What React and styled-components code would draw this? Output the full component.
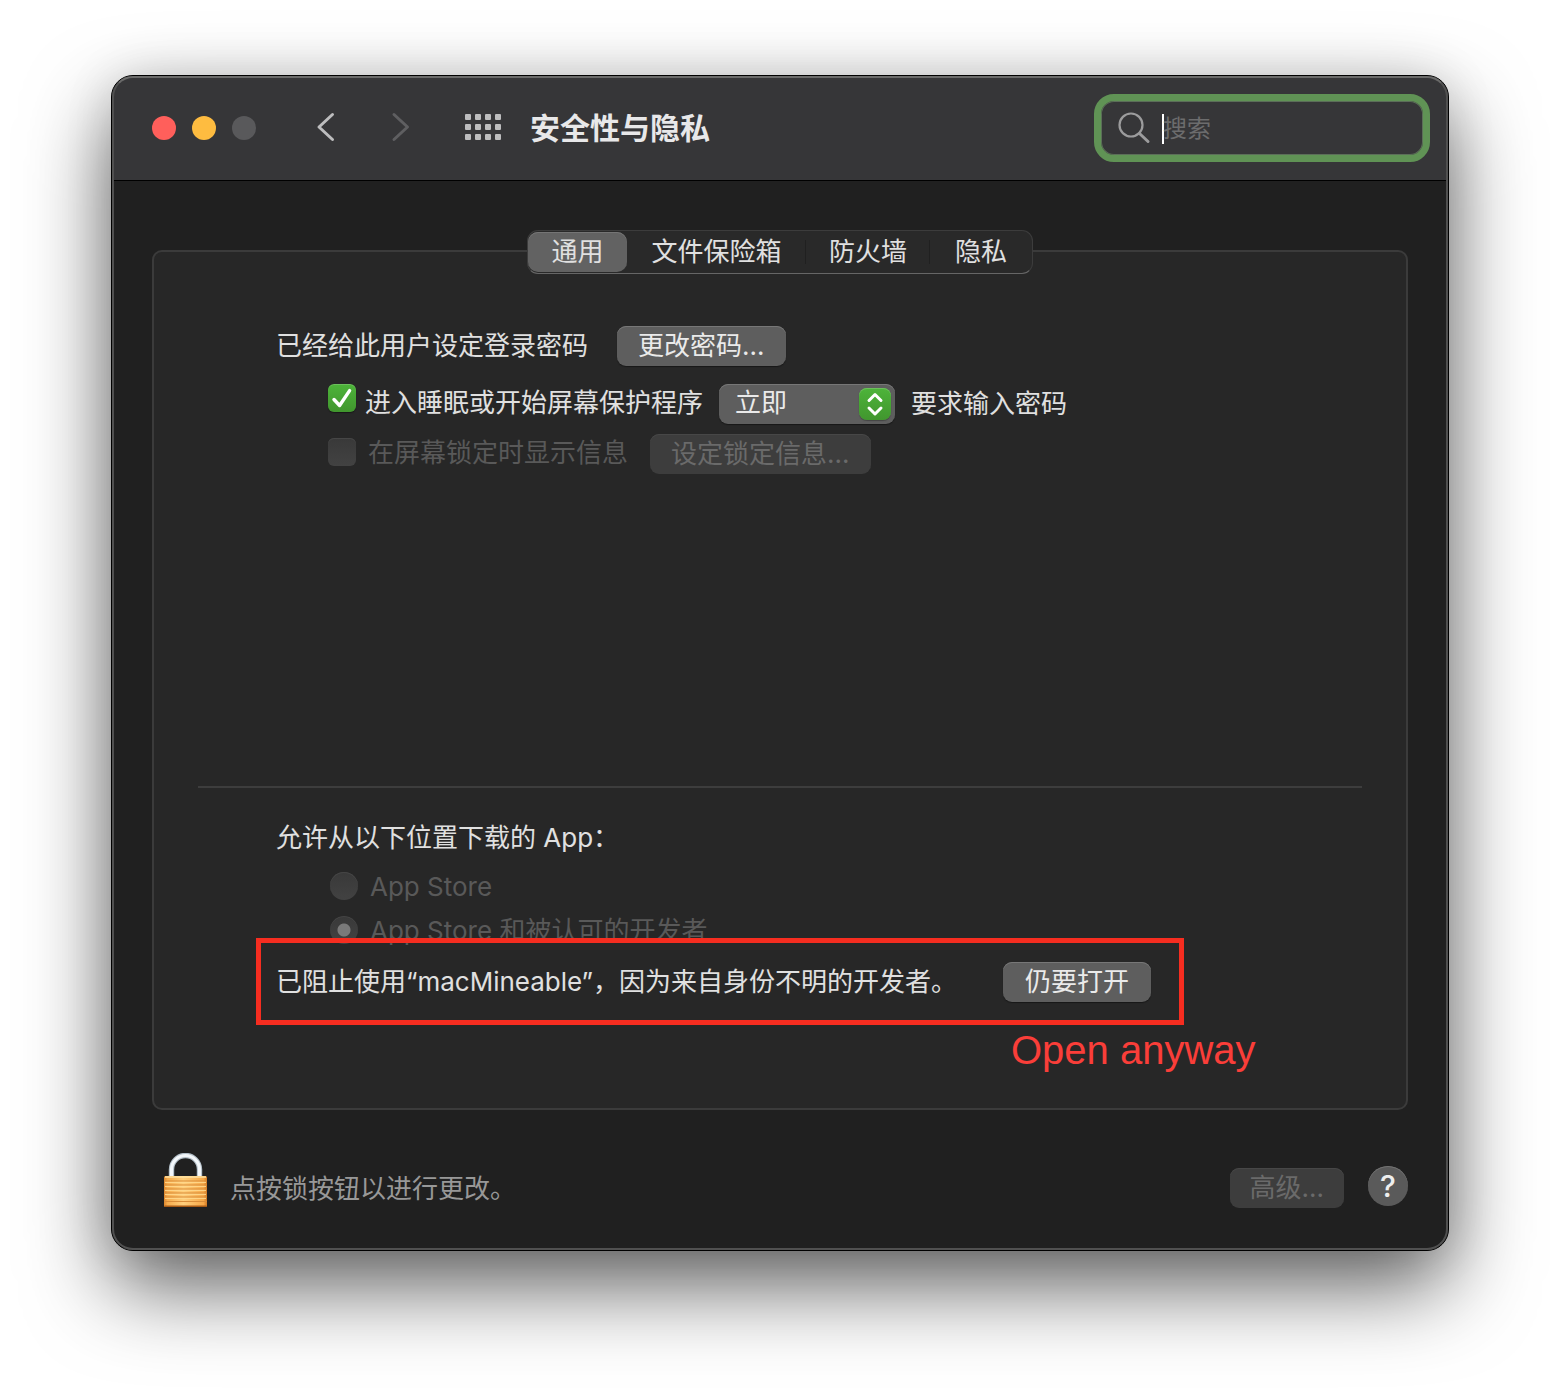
import React, { useState } from "react";
import styled, { createGlobalStyle, css } from "styled-components";

const GlobalStyle = createGlobalStyle`
  *, *::before, *::after { box-sizing: border-box; }
  body {
    margin: 0;
    background: #fff;
    color: #e0e0e0;
    font: 400 26px/40px Inter, "Noto Sans CJK SC", sans-serif;
  }
  button, input, select { font: inherit; color: inherit; margin: 0; }
`;

const Desktop = styled.div`
  padding: 75px 111px 147px;
`;

const Window = styled.main`
  position: relative;
  border: 1px solid #000;
  border-radius: 22px;
  background: #202020;
  box-shadow: 0 36px 84px rgba(0, 0, 0, 0.62), 0 0 50px rgba(0, 0, 0, 0.1);

  &::after {
    content: "";
    position: absolute;
    inset: 0;
    border: 2px solid #505050;
    border-top-color: #6b6b6a;
    border-radius: 21px;
    pointer-events: none;
  }
`;

const TitleBar = styled.header`
  display: flex;
  align-items: center;
  height: 105px;
  padding: 0 18px 0 40px;
  border-bottom: 1px solid #000;
  border-radius: 21px 21px 0 0;
  background: #363638;
`;

const TrafficLights = styled.div`
  display: flex;
  gap: 16px;
`;

const Light = styled.button`
  width: 24px;
  height: 24px;
  padding: 0;
  border: 0;
  border-radius: 50%;
  background: ${(p) => p.$color};
`;

const Navigation = styled.nav`
  display: flex;
  gap: 39px;
  margin-left: 52px;
`;

const IconButton = styled.button`
  display: flex;
  align-items: center;
  justify-content: center;
  width: 36px;
  height: 40px;
  padding: 0;
  border: 0;
  background: none;
  color: #bdbdbe;

  &:disabled { color: #5f5f61; }
`;

const GridButton = styled(IconButton)`
  margin-left: 46px;
`;

const Title = styled.h1`
  margin: 0 auto 0 29px;
  font-size: 30px;
  font-weight: 700;
  line-height: 38px;
  color: #e8e8e9;
`;

const SearchField = styled.label`
  display: flex;
  align-items: center;
  width: 336px;
  height: 68px;
  padding: 0 20px 0 16px;
  border: 7px solid #609355;
  border-radius: 20px;
  box-shadow: inset 0 0 0 1px #5c6e59;
`;

const SearchInput = styled.input`
  flex: 1;
  min-width: 0;
  padding: 2px 0 0;
  border: 0;
  outline: 0;
  background: none;
  font-size: 24px;
  caret-color: transparent;

  &::placeholder { color: #6c6c6d; opacity: 1; }
`;

const Caret = styled.span`
  width: 2px;
  height: 30px;
  margin: 2px -1px 0 11px;
  background: #fff;
`;

const Content = styled.div`
  padding: 49px 40px 42px;
`;

const TabList = styled.div`
  position: relative;
  z-index: 1;
  display: grid;
  grid-template-columns: 99px 179px 124px 102px;
  width: max-content;
  height: 44px;
  margin: 0 auto -24px;
  border: 1px solid #3c3c3c;
  border-bottom-color: #666;
  border-radius: 11px;
  background: #292929;
`;

const Tab = styled.button`
  height: 40px;
  margin-top: 1px;
  padding: 0;
  border: 0;
  background: none;
  line-height: 38px;

  ${(p) => p.$divided && css`
    background: linear-gradient(#202020, #202020) right center / 1px 24px no-repeat;
  `}
  ${(p) => p["aria-selected"] && css`
    border-radius: 10px;
    background: #626262;
    box-shadow: inset 0 1px #757575;
  `}
`;

const Panel = styled.section`
  padding: 74px 44px 106px;
  border: 2px solid #3b3b3b;
  border-radius: 10px;
  background: #272727;
`;

const LoginSettings = styled.div`
  display: flex;
  flex-direction: column;
  min-height: 460px;
  padding: 0 78px;
`;

const Row = styled.div`
  display: flex;
  align-items: center;
  gap: ${(p) => p.$gap}px;
  margin: ${(p) => p.$top || 0}px 0 0 ${(p) => (p.$indent ? 52 : 0)}px;
  line-height: 38px;
`;

const CheckLabel = styled.label`
  display: flex;
  gap: ${(p) => p.$gap}px;
  height: 40px;
  color: ${(p) => (p.$dim ? "#595959" : "inherit")};
`;

const CheckBox = styled.input`
  appearance: none;
  width: 28px;
  height: 28px;
  margin-top: ${(p) => (p.disabled ? 4 : 0)}px;
  border-radius: 6px;
  background: linear-gradient(#393939, #424242);
  box-shadow: inset 0 1px #464646;

  &:checked {
    background:
      url("data:image/svg+xml,%3Csvg xmlns='http://www.w3.org/2000/svg' viewBox='0 0 28 28'%3E%3Cpath d='M6 15.5l5.6 6L21.6 6.6' fill='none' stroke='white' stroke-width='3.4' stroke-linecap='round' stroke-linejoin='round'/%3E%3C/svg%3E"),
      linear-gradient(#4db43a, #41962e);
    box-shadow: inset 0 1px #6cc05c, 0 1px 1px #181818;
  }
`;

const PushButton = styled.button`
  height: 40px;
  padding: 0 ${(p) => p.$pad || 21}px;
  border: 0;
  border-radius: 9px;
  background: #5e5e5e;
  box-shadow: inset 0 1px #777, 0 1px 1px #181818;
  color: #eaeaea;
  line-height: 38px;

  &:disabled {
    background: #3d3d3d;
    box-shadow: inset 0 1px #474747;
    color: #6a6a6a;
  }
`;

const SelectBox = styled.div`
  position: relative;
  width: 176px;
  height: 40px;
`;

const Select = styled.select`
  appearance: none;
  width: 100%;
  height: 40px;
  padding: 0 40px 2px 16px;
  border: 0;
  border-radius: 9px;
  background: #5e5e5e;
  box-shadow: inset 0 1px #777, 0 1px 1px #181818;
  color: #eaeaea;
  line-height: 38px;
`;

const SelectArrows = styled.svg`
  position: absolute;
  top: 4px;
  right: 4px;
  border-radius: 8px;
  background: linear-gradient(#4db43a, #41962e);
  box-shadow: inset 0 1px #6cc05c, 0 1px 1px #444;
  pointer-events: none;
`;

const Divider = styled.hr`
  height: 2px;
  margin: 0;
  border: 0;
  background: #3d3d3d;
`;

const DownloadSettings = styled.div`
  padding: 30px 78px 0;
`;

const RadioGroup = styled.fieldset`
  display: grid;
  gap: 16px;
  margin: 0 0 18px;
  padding: 0;
  border: 0;
`;

const Legend = styled.legend`
  padding: 0 0 14px;
`;

const RadioLabel = styled.label`
  display: flex;
  gap: 12px;
  height: 28px;
  margin-left: 54px;
  color: #595959;
  line-height: 30px;
`;

const Radio = styled.input`
  appearance: none;
  width: 28px;
  height: 28px;
  border-radius: 50%;
  background: linear-gradient(#393939, #424242);
  box-shadow: inset 0 1px #464646;

  &:checked {
    background: radial-gradient(circle, #7a7a7a 6px, transparent 7px), linear-gradient(#393939, #424242);
  }
`;

const BlockedApp = styled.div`
  position: relative;
  display: flex;
  align-items: center;
  justify-content: space-between;
  width: 875px;
  line-height: 38px;
`;

const Highlight = styled.div`
  position: absolute;
  inset: -24px -33px -23px -20px;
  border: 5px solid #f62d20;
  pointer-events: none;
`;

const Note = styled.span`
  position: absolute;
  top: 65px;
  left: 735px;
  color: #fa3e39;
  font: 40px/46px "Liberation Sans", Arial, sans-serif;
  white-space: nowrap;
`;

const Footer = styled.footer`
  display: flex;
  align-items: flex-end;
  padding-top: 43px;
`;

const LockButton = styled.button`
  display: flex;
  margin: 0 22px 0 11px;
  padding: 0;
  border: 0;
  background: none;
`;

const Hint = styled.p`
  margin: 0 auto 0 0;
  color: #989898;
  line-height: 38px;
`;

const HelpButton = styled.button`
  width: 40px;
  height: 40px;
  margin: 0 0 2px 24px;
  padding: 0;
  border: 0;
  border-radius: 50%;
  background: #5a5a5a;
  box-shadow: inset 0 1px #727272;
  color: #eee;
  font-size: 30px;
  font-weight: 500;
`;

const dots = [0, 1, 2].flatMap((r) => [0, 1, 2, 3].map((c) => [c * 10, r * 10]));
const ribs = [31, 35, 39, 43, 47];

function Lock() {
  return (
    <svg width="45" height="55" viewBox="0 0 45 55" aria-hidden="true">
      <defs>
        <linearGradient id="brass">
          <stop offset="0" stopColor="#dd862c" />
          <stop offset="0.08" stopColor="#f6ac4d" />
          <stop offset="0.45" stopColor="#ffcf7c" />
          <stop offset="0.92" stopColor="#f6a848" />
          <stop offset="1" stopColor="#d27a24" />
        </linearGradient>
      </defs>
      <path d="M8.500 26V16.500a14 14 0 0 1 28 0V26" fill="none" stroke="#b3bfc8" strokeWidth="5.400" />
      <path d="M8.500 26V16.500a14 14 0 0 1 28 0V26" fill="none" stroke="#f3f7fa" strokeWidth="3.200" />
      <rect x="1" y="23" width="43" height="31" rx="1.500" fill="url(#brass)" />
      <path d="M2 24h41" stroke="#ffe3a3" strokeWidth="1.500" />
      {ribs.map((y) => (
        <g key={y}>
          <path d={`M1 ${y - 3}h43`} stroke="#d98c39" strokeWidth="1.200" />
          <path d={`M2 ${y - 1.6}h41`} stroke="#ffd88c" strokeWidth="1" />
        </g>
      ))}
      <path d="M1 48.500h43" stroke="#d98c39" strokeWidth="1.200" />
      <path d="M1.500 53.300h42" stroke="#a75a16" strokeWidth="1.400" />
    </svg>
  );
}

const tabs = ["通用", "文件保险箱", "防火墙", "隐私"];

export default function App() {
  const [tab, setTab] = useState(0);
  const [locked, setLocked] = useState(true);
  return (
    <>
      <GlobalStyle />
      <Desktop lang="zh-CN">
        <Window>
          <TitleBar>
            <TrafficLights>
              <Light $color="#ff5f5b" aria-label="关闭" />
              <Light $color="#febc40" aria-label="最小化" />
              <Light $color="#59595b" aria-label="缩放" disabled />
            </TrafficLights>
            <Navigation>
              <IconButton aria-label="后退">
                <svg width="20" height="32" viewBox="0 0 20 32" fill="none" stroke="currentColor" strokeWidth="3" strokeLinecap="round" strokeLinejoin="round">
                  <path d="M16.500 2.500L3 15l13.500 12.500" />
                </svg>
              </IconButton>
              <IconButton aria-label="前进" disabled>
                <svg width="20" height="32" viewBox="0 0 20 32" fill="none" stroke="currentColor" strokeWidth="3" strokeLinecap="round" strokeLinejoin="round">
                  <path d="M3 2.500L16.500 15L3 27.500" />
                </svg>
              </IconButton>
            </Navigation>
            <GridButton aria-label="显示全部">
              <svg width="36" height="28" viewBox="0 0 36 28" fill="currentColor">
                {dots.map(([x, y]) => (
                  <rect key={`${x}-${y}`} x={x} y={y} width="6" height="6" rx="1" />
                ))}
              </svg>
            </GridButton>
            <Title>安全性与隐私</Title>
            <SearchField>
              <svg width="34" height="34" viewBox="0 0 34 34" fill="none" stroke="#9c9c9d" aria-hidden="true">
                <circle cx="14" cy="14" r="11.500" strokeWidth="2.200" />
                <path d="M22.500 22.500l8.500 8" strokeWidth="3" strokeLinecap="round" />
              </svg>
              <Caret />
              <SearchInput type="text" placeholder="搜索" aria-label="搜索" />
            </SearchField>
          </TitleBar>

          <Content>
            <TabList role="tablist">
              {tabs.map((name, i) => (
                <Tab key={name} role="tab" aria-selected={i === tab} $divided={i === 1 || i === 2} onClick={() => setTab(i)}>
                  {name}
                </Tab>
              ))}
            </TabList>

            <Panel>
              <LoginSettings>
                <Row $gap={29}>
                  <span>已经给此用户设定登录密码</span>
                  <PushButton>更改密码…</PushButton>
                </Row>
                <Row $gap={16} $top={18} $indent>
                  <CheckLabel $gap={9}>
                    <CheckBox type="checkbox" defaultChecked />
                    进入睡眠或开始屏幕保护程序
                  </CheckLabel>
                  <SelectBox>
                    <Select aria-label="要求输入密码的时间" defaultValue="now">
                      <option value="now">立即</option>
                    </Select>
                    <SelectArrows width="32" height="32" viewBox="0 0 32 32" fill="none" stroke="#fff" strokeWidth="3" strokeLinecap="round" strokeLinejoin="round">
                      <path d="M10 12.500l6-6 6 6M10 20l6 6 6-6" />
                    </SelectArrows>
                  </SelectBox>
                  <span>要求输入密码</span>
                </Row>
                <Row $gap={22} $top={10} $indent>
                  <CheckLabel $gap={12} $dim>
                    <CheckBox type="checkbox" disabled />
                    在屏幕锁定时显示信息
                  </CheckLabel>
                  <PushButton disabled>设定锁定信息…</PushButton>
                </Row>
              </LoginSettings>
              <Divider />
              <DownloadSettings>
                <RadioGroup>
                  <Legend>允许从以下位置下载的 App：</Legend>
                  <RadioLabel>
                    <Radio type="radio" name="source" disabled />
                    App Store
                  </RadioLabel>
                  <RadioLabel>
                    <Radio type="radio" name="source" defaultChecked disabled />
                    App Store 和被认可的开发者
                  </RadioLabel>
                </RadioGroup>
                <BlockedApp>
                  <span>已阻止使用“macMineable”，因为来自身份不明的开发者。</span>
                  <PushButton $pad={22}>仍要打开</PushButton>
                  <Highlight />
                  <Note lang="en">Open anyway</Note>
                </BlockedApp>
              </DownloadSettings>
            </Panel>

            <Footer>
              <LockButton aria-label="锁" aria-pressed={locked} onClick={() => setLocked(!locked)}>
                <Lock />
              </LockButton>
              <Hint>点按锁按钮以进行更改。</Hint>
              <PushButton $pad={20} disabled>高级…</PushButton>
              <HelpButton aria-label="帮助">?</HelpButton>
            </Footer>
          </Content>
        </Window>
      </Desktop>
    </>
  );
}
